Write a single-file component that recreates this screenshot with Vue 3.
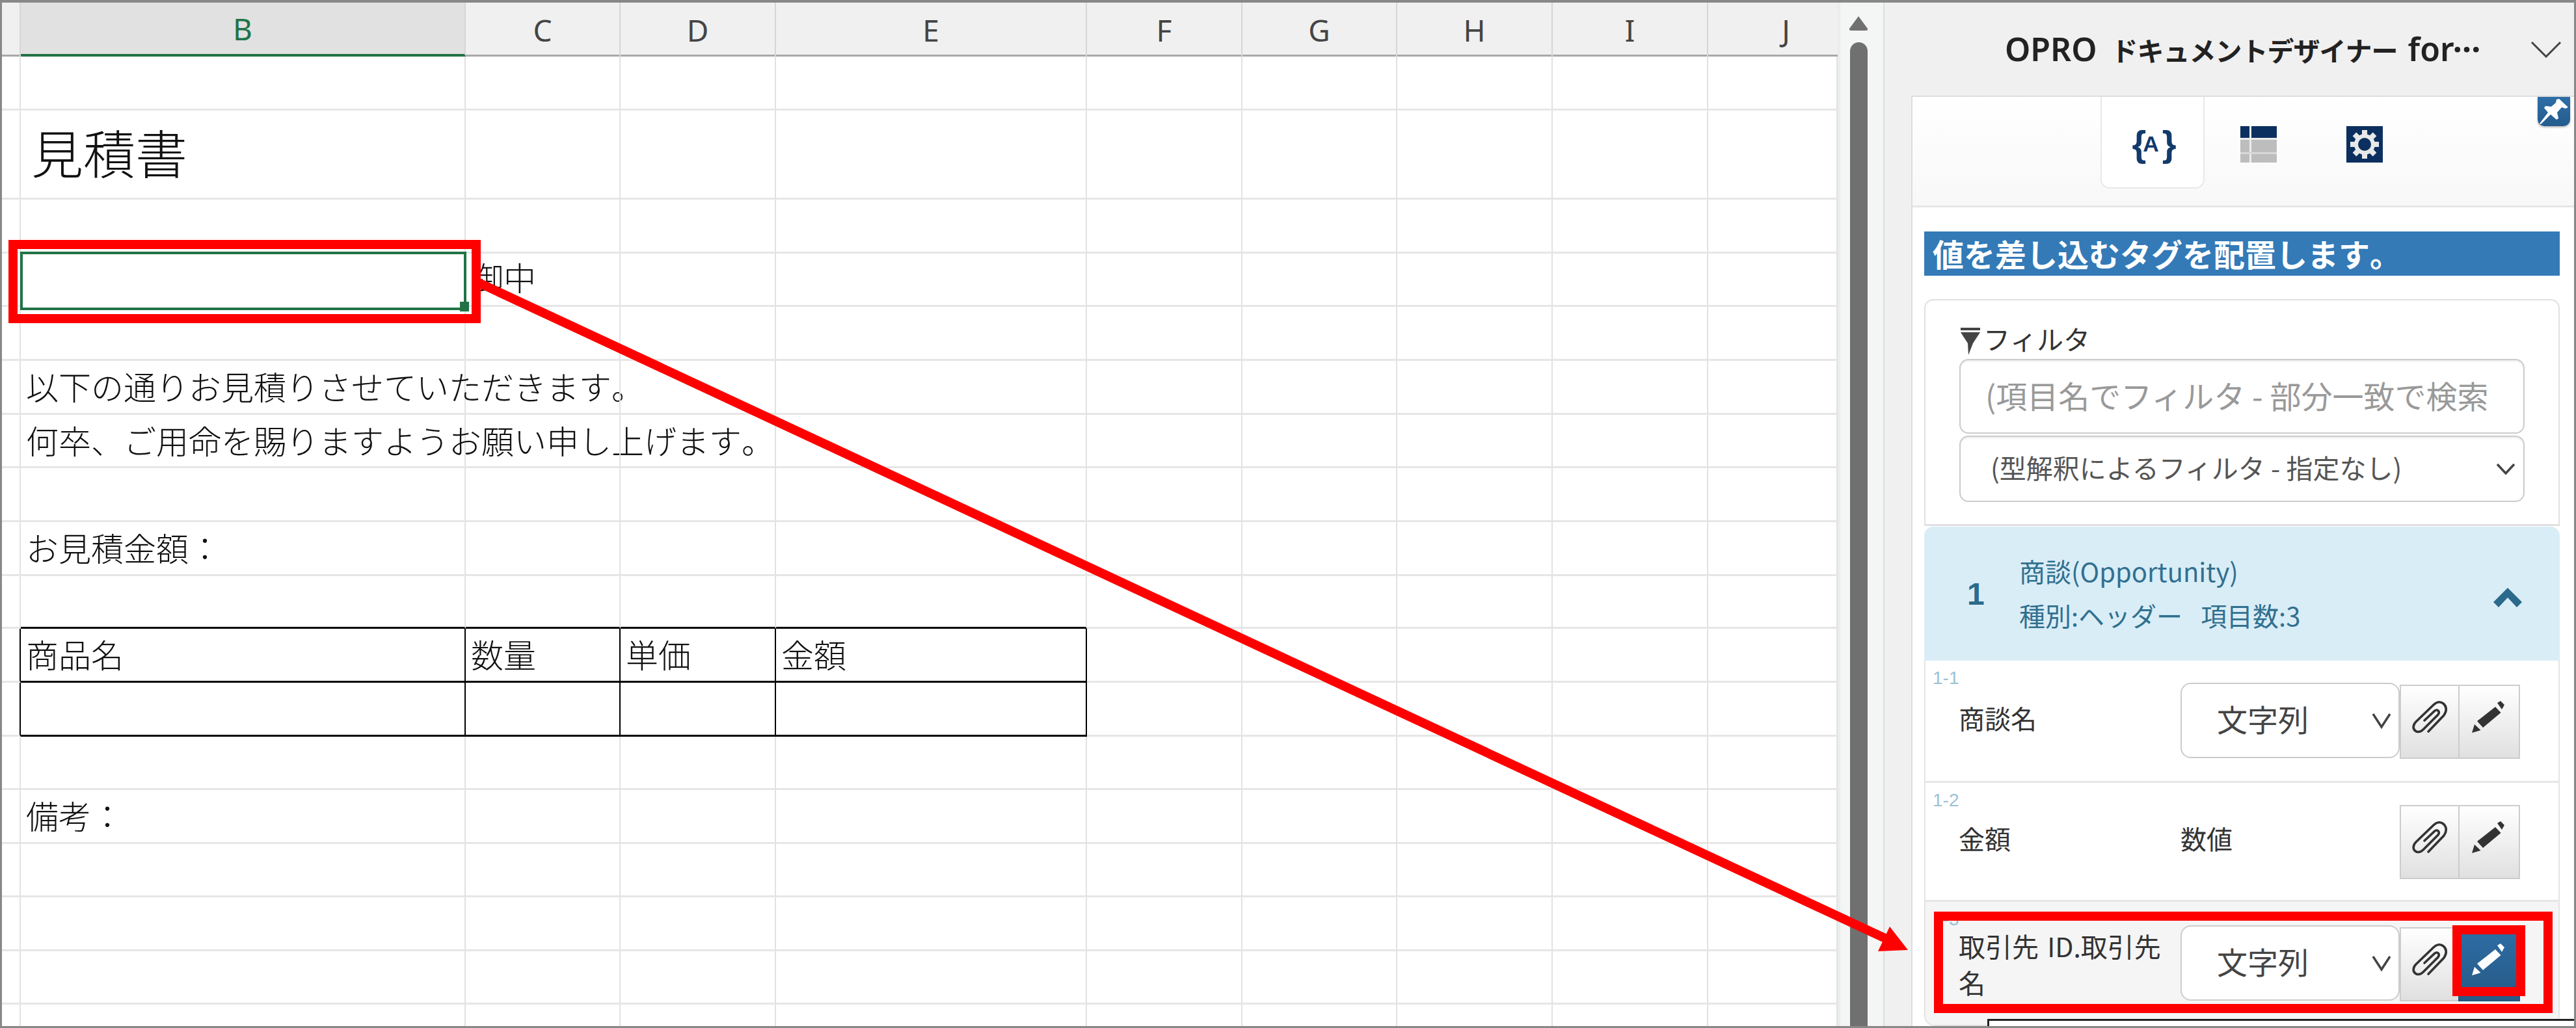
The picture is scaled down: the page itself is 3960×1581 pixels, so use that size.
<script setup>
const colWidths = [32, 684, 238, 239, 478, 239, 238, 239, 239, 199]
const headers = ['', 'B', 'C', 'D', 'E', 'F', 'G', 'H', 'I', 'J']
const gridCols = colWidths.map((w) => w + 'px').join(' ')

const rowHeights = [83, 137, 83, 82, 83, 83, 82, 83, 83, 81, 83, 83, 82, 83, 82, 83, 82, 36]
const texts = {
  '1-1': { t: '見積書', c: 'title' },
  '3-2': { t: '御中', c: 'lift' },
  '5-1': { t: '以下の通りお見積りさせていただきます。' },
  '6-1': { t: '何卒、ご用命を賜りますようお願い申し上げます。' },
  '8-1': { t: 'お見積金額：' },
  '10-1': { t: '商品名' },
  '10-2': { t: '数量' },
  '10-3': { t: '単価' },
  '10-4': { t: '金額' },
  '13-1': { t: '備考：' },
}

function cellClass(r, c) {
  const cls = []
  const inCols = c >= 1 && c <= 4
  if (inCols && (r === 9 || r === 10 || r === 11)) cls.push('bb')
  if (c >= 0 && c <= 4 && (r === 10 || r === 11)) cls.push('br')
  if (r === 3 && c === 1) cls.push('nob')
  return cls
}

const cells = []
rowHeights.forEach((_, r) => {
  colWidths.forEach((__, c) => {
    const entry = texts[r + '-' + c]
    cells.push({ key: r + '-' + c, text: entry ? entry.t : '', cls: [...cellClass(r, c), entry && entry.c ? entry.c : ''] })
  })
})
const gridRows = rowHeights.map((h) => h + 'px').join(' ')

const fields = [
  { no: '1-1', name: '商談名', type: '文字列', select: true, h: 188 },
  { no: '1-2', name: '金額', type: '数値', select: false, h: 183 },
  { no: '1-3', name: '取引先 ID.取引先名', type: '文字列', select: true, h: 189, active: true },
]
</script>

<template>
  <div class="root">
    <section class="sheet">
      <div class="colhead" :style="{ gridTemplateColumns: gridCols }">
        <div v-for="(h, i) in headers" :key="i" class="ch" :class="{ sel: h === 'B', last: h === 'J' }">{{ h }}</div>
      </div>
      <div class="grid" :style="{ gridTemplateColumns: gridCols, gridTemplateRows: gridRows }">
        <div v-for="cell in cells" :key="cell.key" class="cell" :class="cell.cls">{{ cell.text }}</div>
      </div>
    </section>

    <aside class="scroll">
      <svg class="arrow-up" width="32" height="24" viewBox="0 0 32 24"><path d="M16 1 L30 20 Q31 23 27 23 H5 Q1 23 2 20 Z" fill="#707070" /></svg>
      <div class="thumb"></div>
    </aside>

    <aside class="panel">
      <header class="ptitle">
        <span class="ptext"><span class="lat">OPRO</span><span class="jp">ドキュメントデザイナー</span><span class="lat for">for</span><span class="dots">…</span></span>
        <svg width="48" height="26" viewBox="0 0 48 26"><path d="M2 2 L24 24 L46 2" fill="none" stroke="#444" stroke-width="3" /></svg>
      </header>
      <div class="pbody">
        <nav class="tabs">
          <div class="tab active"><span class="brace-ico">{<b>A</b>}</span></div>
          <div class="tab">
            <svg width="56" height="56" viewBox="0 0 56 56">
              <rect width="56" height="56" fill="#bdbdbd" />
              <rect width="56" height="18" fill="#0b2f5f" />
              <rect x="14" width="3" height="56" fill="#ececec" />
              <rect y="18" width="56" height="3" fill="#ececec" />
              <rect y="40" width="56" height="3" fill="#d8d8d8" />
            </svg>
          </div>
          <div class="tab">
            <svg width="56" height="56" viewBox="0 0 56 56">
              <rect width="56" height="56" fill="#0b2f5f" />
              <g fill="#e8e8e8">
                <circle cx="28" cy="28" r="16" />
                <rect v-for="a in [0, 45, 90, 135]" :key="a" x="24" y="6" width="8" height="44" :transform="`rotate(${a} 28 28)`" />
              </g>
              <circle cx="28" cy="28" r="10" fill="#0b2f5f" />
            </svg>
          </div>
          <div class="pin">
            <svg width="50" height="45" viewBox="0 0 50 45">
              <path d="M33 3 L47 16 L43 18 L37 16 L30 24 L32 33 L29 35 L20 27 L5 42 L3 41 L16 24 L10 17 L12 14 L21 15 L28 9 L29 4 Z" fill="#fff" />
            </svg>
          </div>
        </nav>
        <div class="content">
          <div class="banner">値を差し込むタグを配置します。</div>
          <div class="fcard">
            <div class="flabel">
              <svg width="34" height="42" viewBox="0 0 34 42">
                <rect x="2" y="0" width="30" height="4" fill="#444" />
                <path d="M2 7 H32 L21 24 L14 42 L13 24 Z" fill="#444" />
              </svg>
              <span>フィルタ</span>
            </div>
            <input class="finput" type="text" placeholder="(項目名でフィルタ - 部分一致で検索" />
            <div class="selwrap">
              <select class="fselect"><option>(型解釈によるフィルタ - 指定なし)</option></select>
              <svg class="chev" width="30" height="18" viewBox="0 0 30 18"><path d="M2 2 L15 16 L28 2" fill="none" stroke="#444" stroke-width="3.5" /></svg>
            </div>
          </div>
          <div class="ahead">
            <span class="anum">1</span>
            <div class="atext">
              <div class="aname">商談(Opportunity)</div>
              <div class="ameta">種別:ヘッダー<span class="acount">項目数:3</span></div>
            </div>
            <svg class="aup" width="44" height="30" viewBox="0 0 44 30"><path d="M22 0 L44 22 L36 30 L22 15 L8 30 L0 22 Z" fill="#2b6a8c" /></svg>
          </div>
          <div class="rows">
            <div v-for="f in fields" :key="f.no" class="frow" :class="{ hl: f.active }" :style="{ height: f.h + 'px' }">
              <span class="fno">{{ f.no }}</span>
              <div class="fname">{{ f.name }}</div>
              <div class="ftype">
                <div v-if="f.select" class="selwrap">
                  <select class="tselect"><option>{{ f.type }}</option></select>
                  <svg class="chev small" width="30" height="28" viewBox="0 0 30 28"><path d="M2 4 L15 24 L28 4" fill="none" stroke="#444" stroke-width="3.5" /></svg>
                </div>
                <span v-else>{{ f.type }}</span>
              </div>
              <div class="btns">
                <button class="btn clip" type="button">
                  <svg width="56" height="52" viewBox="0 0 56 52">
                    <path d="M26 48 L50 23 C55 16 54 9 49 5 C44 1 38 3 34 7 L7 33 C2 38 2 44 6 47 C10 50 15 48 18 45 L41 22 C44 18 41 13 36 16 L20 31" fill="none" stroke="#333" stroke-width="3.6" stroke-linecap="round" />
                  </svg>
                </button>
                <button class="btn pen" :class="{ on: f.active }" type="button">
                  <svg width="56" height="54" viewBox="0 0 56 54">
                    <path d="M1 51 L5 38 L14.5 47 Z M9 33 L37 11 L45.5 20 L18 43 Z M40 5 L45 2 L51 8 L47 15 Z" />
                  </svg>
                </button>
              </div>
            </div>
          </div>
        </div>
      </div>
    </aside>

    <!-- annotations laid over the screenshot -->
    <div class="mark mark-cell"></div>
    <div class="handle"></div>
    <div class="selcell"></div>
    <div class="mark mark-row"></div>
    <div class="mark mark-btn"></div>
    <svg class="arrow" width="3960" height="1581" viewBox="0 0 3960 1581">
      <line x1="730" y1="432" x2="2900" y2="1444" stroke="#ff0000" stroke-width="14" />
      <polygon points="2933,1461 2905,1425 2887,1463" fill="#ff0000" />
    </svg>
    <div class="tip"></div>
  </div>
</template>

<style>
html, body { margin: 0; padding: 0; background: #fff; }
</style>

<style scoped>
.root {
  width: 3960px;
  height: 1581px;
  position: relative;
  overflow: hidden;
  display: flex;
  box-sizing: border-box;
  font-family: "Noto Sans CJK JP", "Noto Sans", sans-serif;
  color: #222;
  text-spacing-trim: space-all;
  font-kerning: none;
}
.root::after {
  content: "";
  position: absolute;
  inset: 0;
  border: solid #888;
  border-width: 4px 3px 3px 3px;
  pointer-events: none;
}

/* sheet */
.sheet { width: 2825px; flex: none; background: #fff; }
.colhead { display: grid; height: 87px; background: #f0f0f0; border-bottom: 3px solid #a8a8a8; box-sizing: border-box; }
.ch {
  display: flex;
  align-items: center;
  justify-content: center;
  font-family: "Noto Sans", sans-serif;
  font-size: 46px;
  padding-top: 4px;
  box-sizing: border-box;
  color: #444;
  border-right: 2px solid #d6d6d6;
}
.ch.sel { background: #e1e1e1; color: #217346; border-bottom: 4px solid #217346; height: 87px; }
.ch.last { padding-left: 40px; border-right: none; }
.grid { display: grid; }
.cell {
  font-size: 50px;
  font-weight: 300;
  white-space: nowrap;
  display: flex;
  align-items: center;
  padding-left: 8px;
  padding-bottom: 4px;
  box-sizing: border-box;
  border-right: 2px solid #e2e2e2;
  border-bottom: 3px solid #e6e6e6;
  color: #111;
  min-width: 0;
}
.cell.title { font-size: 80px; padding-left: 16px; padding-bottom: 10px; }
.cell.lift { padding-bottom: 10px; }
.cell.bb { border-bottom-color: #000; }
.cell.br { border-right-color: #000; }
.cell.nob { border-bottom-color: transparent; }

/* scrollbar */
.scroll {
  width: 70px;
  flex: none;
  background: #f4f5f5;
  border-left: 4px solid #e9eded;
  box-sizing: border-box;
  display: flex;
  flex-direction: column;
  align-items: center;
  padding-top: 24px;
  padding-right: 10px;
}
.arrow-up { flex: none; }
.thumb { margin-top: 17px; width: 27px; flex: 1; background: #707070; border-radius: 14px 14px 0 0; }

/* panel */
.panel { flex: 1; min-width: 0; background: #f0f0f0; border-left: 2px solid #ddd; display: flex; flex-direction: column; }
.ptitle { height: 147px; flex: none; box-sizing: border-box; display: flex; align-items: center; padding-left: 185px; padding-top: 4px; }
.ptext { width: 808px; flex: none; font-weight: 700; color: #222; white-space: nowrap; display: flex; align-items: baseline; line-height: 60px; }
.lat { font-family: "Noto Sans", sans-serif; font-size: 50px; font-weight: 600; }
.jp { font-size: 41px; margin-left: 22px; letter-spacing: -1px; }
.for { margin-left: 16px; }
.dots { font-family: "Noto Sans", sans-serif; font-size: 50px; position: relative; top: -14px; margin-left: -2px; }
.pbody { flex: 1; margin-left: 41px; background: #fff; border-left: 2px solid #ddd; border-top: 2px solid #ddd; min-height: 0; }
.tabs {
  height: 170px;
  box-sizing: border-box;
  position: relative;
  display: flex;
  justify-content: flex-start;
  padding-left: 289px;
  background: linear-gradient(#fff, #f8f8f8);
  border-bottom: 3px solid #e6e6e6;
}
.tab { width: 160px; height: 141px; margin-right: 3px; padding-top: 4px; display: flex; align-items: center; justify-content: center; box-sizing: border-box; }
.tab.active { background: #fff; border: 2px solid #e8e8e8; border-top: none; border-radius: 0 0 14px 14px; }
.brace-ico { font-family: "Liberation Sans", sans-serif; font-weight: 700; font-size: 56px; line-height: 60px; color: #123a6b; white-space: nowrap; letter-spacing: -5px; }
.brace-ico b { font-size: 34px; vertical-align: 7px; letter-spacing: 0; margin-right: 5px; }
.pin {
  position: absolute;
  top: 0;
  right: 9px;
  width: 50px;
  height: 45px;
  background: linear-gradient(#2f6ea6, #245c8e);
  border-radius: 0 0 10px 10px;
  box-shadow: 0 2px 3px rgba(0, 0, 0, .25);
}

.content { padding: 37px 25px 0 18px; }
.banner {
  height: 68px;
  background: #337ab7;
  color: #fff;
  font-size: 48px;
  font-weight: 700;
  line-height: 66px;
  padding-left: 13px;
  white-space: nowrap;
}
.fcard {
  margin-top: 36px;
  height: 349px;
  box-sizing: border-box;
  border: 2px solid #e0e0e0;
  border-bottom-width: 3px;
  border-radius: 14px 14px 0 0;
  padding: 36px 52px 0 52px;
}
.flabel { display: flex; align-items: center; gap: 3px; height: 54px; font-size: 41px; color: #333; }
.flabel span { margin-top: -10px; }
.finput {
  display: block;
  width: 100%;
  height: 115px;
  box-sizing: border-box;
  border: 2px solid #ccc;
  border-radius: 14px;
  padding: 0 36px 6px 38px;
  font-family: inherit;
  font-size: 48px;
  font-weight: 400;
  background: #fff;
  outline: none;
  box-shadow: inset 0 2px 3px rgba(0, 0, 0, .07);
}
.finput::placeholder { color: #999; opacity: 1; }
.selwrap { position: relative; }
.fselect {
  display: block;
  width: 100%;
  height: 102px;
  margin-top: 3px;
  box-sizing: border-box;
  appearance: none;
  border: 2px solid #ccc;
  border-radius: 14px;
  padding: 0 60px 6px 46px;
  font-family: inherit;
  font-size: 41px;
  color: #555;
  background: #fff;
  outline: none;
  box-shadow: inset 0 2px 3px rgba(0, 0, 0, .07);
}
.chev { position: absolute; right: 14px; top: 42px; pointer-events: none; }
.chev.small { right: 13px; top: 44px; }

.ahead {
  height: 206px;
  box-sizing: border-box;
  background: #d9edf7;
  color: #31708f;
  border-radius: 14px 14px 0 0;
  display: flex;
  align-items: center;
  padding: 0 58px 0 66px;
  margin-top: 1px;
}
.anum { font-family: "Liberation Sans", sans-serif; font-size: 48px; font-weight: 700; width: 80px; flex: none; color: #2b6a8c; }
.atext { flex: 1; }
.aname { font-size: 40px; line-height: 68px; white-space: nowrap; margin-top: -3px; }
.ameta { font-size: 40px; line-height: 68px; white-space: nowrap; }
.acount { margin-left: 28px; }
.aup { margin-top: 12px; }

.rows { border: 2px solid #e4e4e4; border-top: none; border-radius: 0 0 16px 16px; overflow: hidden; }
.frow {
  position: relative;
  display: flex;
  align-items: center;
  box-sizing: border-box;
  padding-left: 51px;
  border-bottom: 3px solid #e6e6e6;
  font-size: 40px;
  color: #333;
}
.frow:last-child { border-bottom: none; }
.frow.hl { background: #f5f5f5; }
.fno { position: absolute; left: 11px; top: 9px; font-family: "Liberation Sans", sans-serif; font-size: 28px; line-height: 36px; color: #9cc1d6; }
.fname { width: 341px; flex: none; box-sizing: border-box; padding-right: 14px; line-height: 56px; padding-bottom: 10px; }
.frow.hl .fname { padding-bottom: 0; font-size: 41px; word-spacing: 4px; }
.ftype { width: 337px; flex: none; padding-bottom: 2px; box-sizing: border-box; }
.ftype > span { display: block; padding-bottom: 8px; }
.tselect {
  display: block;
  width: 100%;
  height: 116px;
  box-sizing: border-box;
  appearance: none;
  border: 2px solid #ccc;
  border-radius: 16px;
  padding: 0 0 6px 54px;
  font-family: inherit;
  font-size: 47px;
  color: #444;
  background: #fff;
  outline: none;
}
.btns { display: flex; height: 114px; margin-top: 2px; }
.btn {
  display: flex;
  align-items: center;
  justify-content: center;
  padding: 0;
  box-sizing: border-box;
  height: 114px;
  border: 2px solid #ccc;
  background: linear-gradient(#fff, #e0e0e0);
  fill: #333;
  margin: 0;
}
.btn.clip { width: 90px; border-right: none; }
.btn.pen { width: 95px; }
.btn svg { margin-top: -14px; }
.btn.on { background: linear-gradient(#2e6da4, #265a88); border-color: #245580; fill: #fff; }

/* annotations */
.mark { position: absolute; border: 14px solid #f00; box-sizing: border-box; pointer-events: none; }
.mark-cell { left: 13px; top: 369px; width: 726px; height: 128px; }
.mark-row { left: 2973px; top: 1402px; width: 951px; height: 156px; }
.mark-btn { left: 3770px; top: 1423px; width: 112px; height: 109px; }
.selcell { position: absolute; left: 31px; top: 387px; width: 686px; height: 90px; box-sizing: border-box; border: 4px solid #217346; }
.handle { position: absolute; left: 707px; top: 464px; width: 14px; height: 15px; background: #217346; z-index: 1; }
.arrow { position: absolute; left: 0; top: 0; pointer-events: none; }
.tip { position: absolute; left: 3055px; top: 1567px; right: 0; bottom: 0; background: #fff; border: solid #222; border-width: 3px 0 0 3px; }
</style>
